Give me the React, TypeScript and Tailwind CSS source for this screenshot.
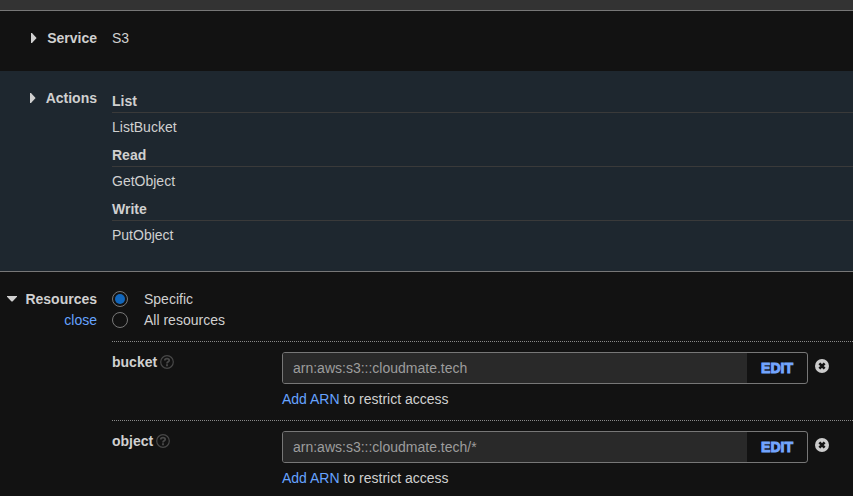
import { useState } from 'react';
import type { ReactNode } from 'react';

const actionGroups = [
  { level: 'List', action: 'ListBucket' },
  { level: 'Read', action: 'GetObject' },
  { level: 'Write', action: 'PutObject' },
];

const resources = [
  { name: 'bucket', arn: 'arn:aws:s3:::cloudmate.tech' },
  { name: 'object', arn: 'arn:aws:s3:::cloudmate.tech/*' },
];

function CaretRight() {
  return (
    <svg className="h-2.5 w-1.5" viewBox="0 0 6 10" fill="#d0d0d0" aria-hidden="true">
      <path d="M0 0 H1 L5.6 5 L1 10 H0 Z" />
    </svg>
  );
}

function CaretDown() {
  return (
    <svg className="h-1.5 w-2.5" viewBox="0 0 10 6" fill="#d0d0d0" aria-hidden="true">
      <path d="M0 0 H10 V0.8 L5.5 5.6 H4.5 L0 0.8 Z" />
    </svg>
  );
}

function HelpIcon() {
  return (
    <svg className="size-3.5" viewBox="0 0 14 14" fill="none" stroke="#484848" aria-hidden="true">
      <circle cx="7" cy="7" r="6.3" strokeWidth="1.2" />
      <path d="M4.8 5.5 C4.8 3 9.2 3 9.2 5.5 C9.2 6.9 7 6.8 7 8.5" strokeWidth="1.8" />
      <path d="M7 9.3 V11.2" strokeWidth="1.9" />
    </svg>
  );
}

function RemoveIcon() {
  return (
    <svg className="size-3.5" viewBox="0 0 14 14" aria-hidden="true">
      <circle cx="7" cy="7" r="7" fill="#cccccc" />
      <path d="M4.4 4.4 L9.6 9.6 M9.6 4.4 L4.4 9.6" stroke="#121212" strokeWidth="2.7" />
    </svg>
  );
}

function SectionToggle({ title, open, children }: { title: string; open?: boolean; children?: ReactNode }) {
  return (
    <div className="flex w-[97px] shrink-0 flex-col items-end">
      <button
        type="button"
        aria-expanded={!!open}
        className={`flex items-center font-bold ${open ? 'gap-2' : 'gap-2.5'}`}
      >
        {open ? <CaretDown /> : <CaretRight />}
        {title}
      </button>
      {children}
    </div>
  );
}

function ResourceRow({ name, arn }: { name: string; arn: string }) {
  return (
    <div className="flex border-t border-dotted border-[#8a8a8a] pt-2.5 pb-[11px]">
      <div className="flex w-[170px] shrink-0 items-center gap-[3px] self-start font-bold">
        <label htmlFor={`arn-${name}`}>{name}</label>
        <button type="button" aria-label={`About ${name}`}>
          <HelpIcon />
        </button>
      </div>
      <div className="min-w-0 flex-1">
        <div className="flex h-8 overflow-hidden rounded-[3px] border border-[#777777]">
          <input
            id={`arn-${name}`}
            readOnly
            defaultValue={arn}
            className="min-w-0 flex-1 bg-[#292929] px-2.5 text-[#9d9d9d] outline-none"
          />
          <button
            type="button"
            className="w-[60px] shrink-0 text-sm font-bold text-[#73a5ff] [-webkit-text-stroke:1px_#73a5ff]"
          >
            EDIT
          </button>
        </div>
        <p className="mt-[5px]">
          <a href="#add-arn" className="text-[#66a3ff]">
            Add ARN
          </a>{' '}
          to restrict access
        </p>
      </div>
      <button type="button" aria-label={`Remove ${name} ARN`} className="mt-[7px] mr-6 ml-[7px] self-start">
        <RemoveIcon />
      </button>
    </div>
  );
}

export default function App() {
  const [scope, setScope] = useState('Specific');

  return (
    <main className="min-h-screen bg-[#121212] font-['Liberation_Sans',Arial,sans-serif] text-sm text-[#d0d0d0]">
      <div className="h-[11px] border-b border-[#777777] bg-[#333333]" />

      <section className="flex gap-[15px] pt-[17px] pb-[23px]">
        <SectionToggle title="Service" />
        <p>S3</p>
      </section>

      <section className="flex gap-[15px] border-b border-[#777777] bg-[#1e272f] pt-[17px] pb-[18px]">
        <SectionToggle title="Actions" />
        <dl className="flex-1 pt-[3px]">
          {actionGroups.map(({ level, action }) => (
            <div key={level} className="pb-2">
              <dt className="border-b border-[#3a3a3a] pb-px font-bold">{level}</dt>
              <dd className="mt-1">{action}</dd>
            </div>
          ))}
        </dl>
      </section>

      <section className="flex gap-[15px] pt-[17px]">
        <SectionToggle title="Resources" open>
          <a href="#close" className="mt-px text-[#66a3ff]">
            close
          </a>
        </SectionToggle>
        <div className="min-w-0 flex-1">
          <fieldset className="mb-[11px] flex flex-col items-start gap-px">
            {['Specific', 'All resources'].map((option) => (
              <label key={option} className="flex items-center gap-4">
                <input
                  type="radio"
                  name="scope"
                  checked={scope === option}
                  onChange={() => setScope(option)}
                  className="size-4 appearance-none rounded-full border border-[#777777] bg-[#121212] bg-clip-content p-0.5 checked:bg-[#1166bb]"
                />
                {option}
              </label>
            ))}
          </fieldset>
          {resources.map((resource) => (
            <ResourceRow key={resource.name} {...resource} />
          ))}
        </div>
      </section>
    </main>
  );
}
